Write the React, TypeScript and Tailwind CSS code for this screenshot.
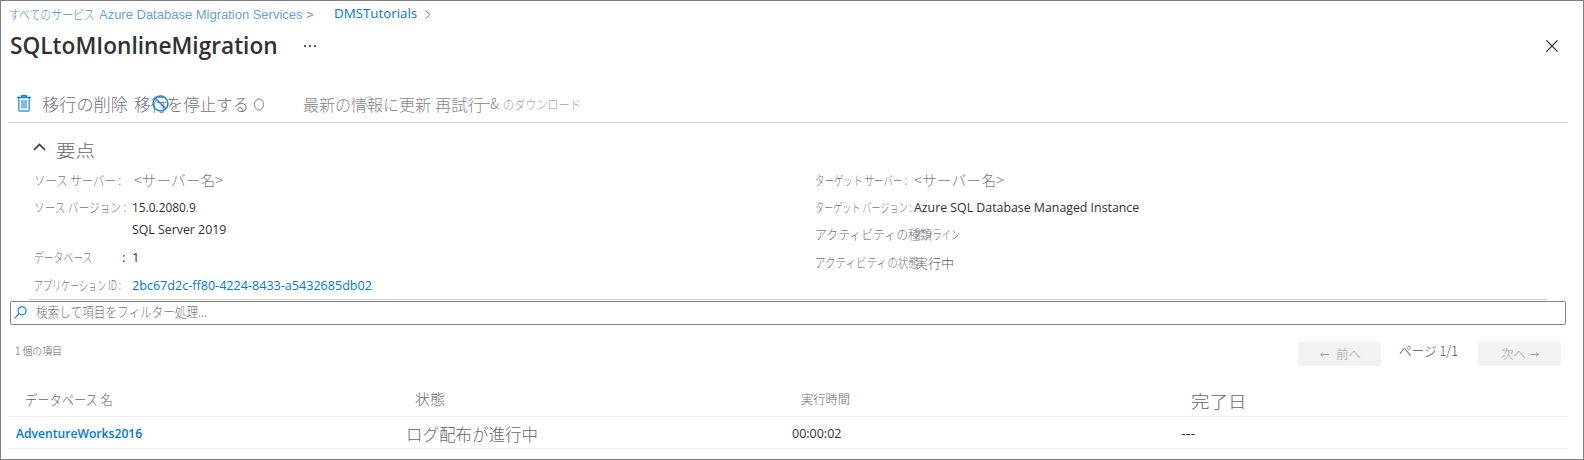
import { useLayoutEffect, useRef, type ReactNode } from "react";

const JP = "font-['Noto_Sans_CJK_JP',sans-serif] font-light";
const UI = "font-['Open_Sans','Noto_Sans_CJK_JP',sans-serif]";

/** One line of text, condensed or stretched to the width of its box. */
function Fit({ className, children }: { className: string; children: ReactNode }) {
  const box = useRef<HTMLSpanElement>(null);
  const text = useRef<HTMLSpanElement>(null);
  useLayoutEffect(() => {
    if (box.current && text.current) {
      text.current.style.transform = `scaleX(${box.current.clientWidth / text.current.offsetWidth})`;
    }
  }, []);
  return (
    <span ref={box} className={`block shrink-0 whitespace-nowrap ${className}`}>
      <span ref={text} className="inline-block origin-left">
        {children}
      </span>
    </span>
  );
}

function Trash() {
  return (
    <svg className="ml-[17px] block h-[17px] w-[14px] shrink-0" viewBox="0 0 14 17" fill="none">
      <path d="M0 2.5h14M4.5 2V.7h5V2" stroke="#0f7fd6" strokeWidth="1.4" />
      <path d="M1.8 3v11.7q0 1.3 1.3 1.3h7.8q1.3 0 1.3-1.3V3" stroke="#3a97df" strokeWidth="1.4" />
      <path d="M4 5h6v8.5H4z" fill="#7db9ea" />
    </svg>
  );
}

function Breadcrumb() {
  return (
    <nav className="flex h-[26px] items-center text-[#669fd8]">
      <Fit className={`-mt-px ml-[8px] w-[86px] text-[13px] text-[#4a8fd2] ${JP}`}>すべてのサービス</Fit>
      <Fit className="ml-[4px] mt-[2px] w-[215px] font-['Liberation_Sans',sans-serif] text-[12.5px]">
        Azure Database Migration Services &gt;
      </Fit>
      <Fit className={`ml-[20px] w-[83px] text-[13px] text-[#0078d4] ${UI}`}>DMSTutorials</Fit>
      <svg className="ml-[8px] h-[9px] w-[6px]" viewBox="0 0 6 9" fill="none">
        <path d="M.6.5 5 4.5l-4.4 4" stroke="#808080" />
      </svg>
    </nav>
  );
}

function Toolbar() {
  return (
    <div className={`ml-[7px] mt-[20px] flex h-[38px] w-[1560px] items-center border-b border-[#d2d2d2] text-[17px] text-[#70708c] ${JP}`}>
      <div className="-ml-[8px] flex items-center">
        <Trash />
        <Fit className="ml-[11px] w-[86px]">移行の削除</Fit>
        <div className="relative ml-[6px]">
          <Fit className="w-[115px]">移行を停止する</Fit>
          <svg className="absolute left-[18px] top-[4px] h-[17px] w-[17px]" viewBox="0 0 17 17" fill="none">
            <circle cx="8.5" cy="8.5" r="7.4" stroke="#1b87dc" strokeWidth="1.5" />
            <path d="m3.3 3.3 10.4 10.4" stroke="#1b87dc" strokeWidth="1.5" />
          </svg>
        </div>
        <svg className="ml-[5px] mt-[2px] h-[13px] w-[10px]" viewBox="0 0 10 13" fill="none">
          <ellipse cx="5" cy="6.5" rx="4.5" ry="5.5" stroke="#80809a" />
        </svg>
      </div>
      <div className="ml-[39px] flex items-center text-[16px] text-[#85858c]">
        <div className="relative">
          <Fit className="w-[128px]">最新の情報に更新</Fit>
          <svg className="absolute left-[60px] top-[3px] h-[18px] w-[14px]" viewBox="0 0 14 18" fill="none">
            <path d="M1 6a5 5 0 0 1 9-2l2 1M3 9q2 5 6 7" stroke="#b5b5b5" />
          </svg>
        </div>
        <Fit className="ml-[4px] w-[49px]">再試行</Fit>
        <Fit className="-ml-[3px] w-[10px] text-[14px]">ー</Fit>
        <Fit className="-ml-px w-[9px] text-[14px]">&amp;</Fit>
        <Fit className="ml-[4px] w-[78px] text-[13px] text-[#a3a3a3]">のダウンロード</Fit>
      </div>
    </div>
  );
}

const label = `text-[13px] text-[#75757f] ${JP}`;
const value = `text-[13px] text-[#323130] ${UI}`;

function Essentials() {
  return (
    <section>
      <div className="mt-[13px] flex h-[28px] items-center">
        <svg className="-mt-[7px] ml-[32px] h-[8px] w-[13px]" viewBox="0 0 13 8" fill="none">
          <path d="m1 7 5.5-5.5L12 7" stroke="#3b3a39" strokeWidth="1.6" />
        </svg>
        <Fit className={`ml-[10px] w-[39px] text-[17.5px] text-[#66666f] ${JP}`}>要点</Fit>
      </div>
      <div className="mt-[2px] flex h-[133px] leading-[20px]">
        <div className="w-[781px] pl-[33px]">
          <div className="-mt-px flex h-[28px] items-center pt-[2px]">
            <Fit className={`w-[87px] ${label}`}>ソース サーバー :</Fit>
            <Fit className={`ml-[13px] w-[89px] text-[15px] text-[#7a7a80] ${JP}`}>&lt;サーバー名&gt;</Fit>
          </div>
          <div className="flex h-[27px] items-center">
            <Fit className={`w-[92px] ${label}`}>ソース バージョン :</Fit>
            <Fit className={`ml-[6px] w-[64px] ${value}`}>15.0.2080.9</Fit>
          </div>
          <div className="flex h-[17px] items-center">
            <Fit className={`ml-[98px] w-[94px] ${value}`}>SQL Server 2019</Fit>
          </div>
          <div className="mt-[5px] flex h-[28px] items-center pt-px">
            <Fit className={`w-[58px] ${label}`}>データベース</Fit>
            <span className={`ml-[30px] w-[10px] ${value}`}>:</span>
            <span className={`${value}`}>1</span>
          </div>
          <div className="flex h-[28px] items-center pt-[2px]">
            <Fit className={`w-[87px] ${label}`}>アプリケーション ID :</Fit>
            <Fit className={`ml-[11px] w-[240px] text-[13px] text-[#0078d4] ${UI}`}>
              2bc67d2c-ff80-4224-8433-a5432685db02
            </Fit>
          </div>
        </div>
        <div className="-mt-px pl-[33px]">
          <div className="flex h-[28px] items-center pt-[2px]">
            <Fit className={`w-[92px] ${label}`}>ターゲット サーバー :</Fit>
            <Fit className={`ml-[7px] w-[90px] text-[15px] text-[#7a7a80] ${JP}`}>&lt;サーバー名&gt;</Fit>
          </div>
          <div className="flex h-[27px] items-center">
            <Fit className={`w-[97px] ${label}`}>ターゲット バージョン :</Fit>
            <Fit className={`ml-[2px] w-[225px] ${value}`}>Azure SQL Database Managed Instance</Fit>
          </div>
          <div className="flex h-[28px] items-center">
            <Fit className={`w-[117px] ${label}`}>アクティビティの種類</Fit>
            <Fit className={`-ml-[18px] w-[46px] ${label}`}>オンライン</Fit>
          </div>
          <div className="flex h-[28px] items-center">
            <Fit className={`w-[104px] ${label}`}>アクティビティの状態</Fit>
            <Fit className={`-ml-[4px] mt-[2px] w-[39px] text-[13px] text-[#5c5c66] ${JP}`}>実行中</Fit>
          </div>
        </div>
      </div>
      <div className="ml-[27px] h-px w-[1520px] bg-[#d2d2d2]" />
    </section>
  );
}

function SearchBox() {
  return (
    <div className="ml-[9px] mt-px flex h-[24px] w-[1556px] items-center rounded-[2px] border border-[#838383]">
      <svg className="-mt-[2px] ml-[3px] h-[13px] w-[13px]" viewBox="0 0 13 13" fill="none">
        <circle cx="8" cy="4.8" r="4" stroke="#1b87dc" strokeWidth="1.2" />
        <path d="M5 7.8.6 12.4" stroke="#1b87dc" strokeWidth="1.3" />
      </svg>
      <Fit className={`-mt-[4px] ml-[9px] w-[171px] text-[14px] leading-[20px] text-[#75757f] ${JP}`}>
        検索して項目をフィルター処理...
      </Fit>
    </div>
  );
}

function Arrow({ flip }: { flip?: boolean }) {
  return (
    <svg className={flip ? "h-[5px] w-[9px] -scale-x-100" : "h-[5px] w-[9px]"} viewBox="0 0 9 5" fill="none">
      <path d="M.5 2.5H9M3 .5l-2.3 2L3 4.5" stroke="#a0a09f" />
    </svg>
  );
}

function Pager() {
  return (
    <div className="mt-[17px] flex h-[24px] items-start">
      <Fit className={`ml-[14px] w-[47px] text-[10.5px] leading-[17px] text-[#5c5c66] ${JP}`}>1 個の項目</Fit>
      <button className="ml-[1236px] flex h-[24px] w-[83px] items-center rounded-[2px] bg-[#f3f2f1] pl-[22px]">
        <Arrow />
        <Fit className={`ml-[7px] w-[25px] text-[12.5px] text-[#a09f9e] ${JP}`}>前へ</Fit>
      </button>
      <Fit className={`ml-[18px] w-[59px] text-[13.5px] leading-[17px] text-[#5c4a5c] ${JP}`}>ページ 1/1</Fit>
      <button className="ml-[20px] flex h-[24px] w-[83px] items-center rounded-[2px] bg-[#f3f2f1] pl-[23px]">
        <Fit className={`w-[25px] text-[12.5px] text-[#a09f9e] ${JP}`}>次へ</Fit>
        <span className="ml-[4px]">
          <Arrow flip />
        </span>
      </button>
    </div>
  );
}

function Table() {
  return (
    <div className="ml-[7px] mt-[21px] w-[1560px]">
      <div className={`grid h-[30px] grid-cols-[399px_386px_388px_1fr] items-center border-b border-[#eaeaea] pb-[5px] leading-[20px] text-[#66666e] ${JP}`}>
        <Fit className="ml-[17px] w-[88px] text-[13.5px]">データベース 名</Fit>
        <Fit className="-mt-[2px] ml-[8px] w-[30px] text-[14px]">状態</Fit>
        <Fit className="-mt-px ml-[8px] w-[49px] text-[12px]">実行時間</Fit>
        <Fit className="ml-[10px] mt-[3px] w-[56px] text-[17.5px]">完了日</Fit>
      </div>
      <div className={`grid h-[32px] grid-cols-[399px_386px_388px_1fr] items-center border-b border-[#eeeeee] leading-[20px] ${UI}`}>
        <Fit className="ml-[8px] mt-px w-[126px] text-[13px] font-semibold text-[#0078d4]">AdventureWorks2016</Fit>
        <Fit className={`-ml-px mt-[3px] w-[132px] text-[17.5px] text-[#66666e] ${JP}`}>ログ配布が進行中</Fit>
        <Fit className="-ml-px mt-[2px] w-[49px] text-[12.5px] text-[#323130]">00:00:02</Fit>
        <Fit className="w-[15px] text-[13px] text-[#323130]">---</Fit>
      </div>
    </div>
  );
}

export default function App() {
  return (
    <main className="h-[460px] w-[1584px] overflow-hidden border border-[#7f7f7f] bg-white">
      <Breadcrumb />
      <header className="flex h-[38px] items-center">
        <Fit className={`ml-[9px] w-[268px] text-[23.5px] font-semibold text-[#323130] ${UI}`}>
          SQLtoMIonlineMigration
        </Fit>
        <svg className="ml-[26px] h-[2px] w-[12px]" viewBox="0 0 12 2" fill="#5c5b5a">
          <path d="M0 0h2v2H0zM5 0h2v2H5zM10 0h2v2h-2z" />
        </svg>
        <svg className="ml-[1230px] h-[12px] w-[12px]" viewBox="0 0 12 12" fill="none">
          <path d="m.4.4 11.2 11.2M11.6.4.4 11.6" stroke="#222" strokeWidth="1.2" />
        </svg>
      </header>
      <Toolbar />
      <Essentials />
      <SearchBox />
      <Pager />
      <Table />
    </main>
  );
}
